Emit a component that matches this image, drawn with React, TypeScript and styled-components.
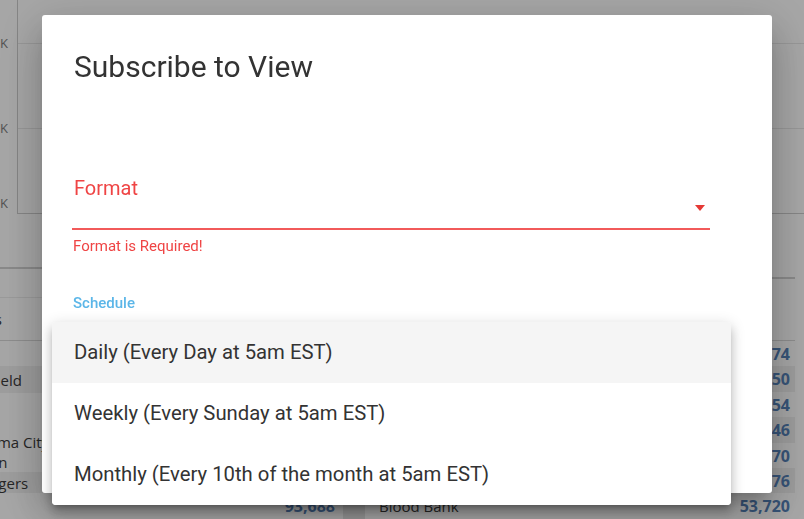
import React from 'react'
import styled, { createGlobalStyle } from 'styled-components'

const GlobalStyle = createGlobalStyle`
  html, body {
    margin: 0;
    padding: 0;
  }
  body {
    width: 804px;
    height: 519px;
    overflow: hidden;
    background: #fff;
    font-family: "Open Sans", "Liberation Sans", sans-serif;
  }
  * {
    box-sizing: border-box;
  }
`

type Row = { name: string, value: string, h: number, shaded?: boolean }

const leftRows: Row[] = [
    { name: 'Waco', value: '98,412', h: 25 },
    { name: 'Springfield', value: '97,350', h: 27, shaded: true },
    { name: 'Tyler', value: '96,204', h: 39 },
    { name: 'Oklahoma City', value: '95,870', h: 20 },
    { name: 'Brighton', value: '95,112', h: 20 },
    { name: 'East Rogers', value: '94,076', h: 21, shaded: true },
    { name: 'Plano', value: '93,688', h: 25 },
]

const rightRows: Row[] = [
    { name: 'Community Center', value: '61,974', h: 25 },
    { name: 'Public Library', value: '60,250', h: 26, shaded: true },
    { name: 'City Hall', value: '58,754', h: 25 },
    { name: 'Fire Station', value: '57,946', h: 26, shaded: true },
    { name: 'Food Pantry', value: '55,870', h: 25 },
    { name: 'Health Clinic', value: '54,976', h: 25, shaded: true },
    { name: 'Blood Bank', value: '53,720', h: 25 },
]

const menuItems = [
    'Daily (Every Day at 5am EST)',
    'Weekly (Every Sunday at 5am EST)',
    'Monthly (Every 10th of the month at 5am EST)',
]

export default function App() {
    return (
        <>
            <GlobalStyle />
            <Page>
                <ChartRow>
                    <AxisCol>
                        <AxisLabel $mt={35}>200K</AxisLabel>
                        <AxisLabel $mt={69}>100K</AxisLabel>
                        <AxisLabel $mt={59}>0K</AxisLabel>
                    </AxisCol>
                    <Plot>
                        <GridBand $h={43} />
                        <GridBand $h={85} $line />
                        <GridBand $h={85} $line />
                    </Plot>
                </ChartRow>

                <TablesRow>
                    <Panel $width={403} $top={53}>
                        <PanelTitle />
                        <HeaderRow $h={42} $padLeft={7}>
                            <HeaderText>Regions</HeaderText>
                        </HeaderRow>
                        {leftRows.map(r => (
                            <TableRow key={r.name} $h={r.h} $shaded={r.shaded} $padLeft={7} $padRight={8}>
                                <Name>{r.name}</Name>
                                <Value>{r.value}</Value>
                            </TableRow>
                        ))}
                    </Panel>
                    <Gap />
                    <Panel $width={430} $top={63}>
                        <HeaderRow $h={61} $padLeft={15}>
                            <HeaderText>Sites</HeaderText>
                        </HeaderRow>
                        {rightRows.map(r => (
                            <TableRow key={r.name} $h={r.h} $shaded={r.shaded} $padLeft={14} $padRight={5}>
                                <Name>{r.name}</Name>
                                <Value>{r.value}</Value>
                            </TableRow>
                        ))}
                    </Panel>
                </TablesRow>

                <Backdrop>
                    <Dialog>
                        <Title>Subscribe to View</Title>
                        <Field>
                            <FieldLabel>Format</FieldLabel>
                            <SelectRow>
                                <Arrow />
                            </SelectRow>
                            <HelperText>Format is Required!</HelperText>
                            <ShrunkLabel>Schedule</ShrunkLabel>
                        </Field>
                    </Dialog>
                </Backdrop>

                <Menu>
                    {menuItems.map((m, i) => (
                        <MenuItem key={m} $active={i === 0}>{m}</MenuItem>
                    ))}
                </Menu>
            </Page>
        </>
    )
}

const Page = styled('div')`
    position: relative;
    width: 804px;
    height: 519px;
    overflow: hidden;
    background: #fff;
`

const ChartRow = styled('div')`
    display: flex;
    height: 214px;
`

const AxisCol = styled('div')`
    width: 17px;
    flex-shrink: 0;
    display: flex;
    flex-direction: column;
    align-items: flex-end;
    padding-right: 9px;
`

const AxisLabel = styled('span')<{ $mt: number }>`
    margin-top: ${p => p.$mt}px;
    line-height: 16px;
    font-size: 13px;
    color: #7e7e7e;
    white-space: nowrap;
`

const Plot = styled('div')`
    flex: 1;
    display: flex;
    flex-direction: column;
    border-left: 1px solid #cdcdcd;
    border-bottom: 1px solid #cdcdcd;
`

const GridBand = styled('div')<{ $h: number, $line?: boolean }>`
    height: ${p => p.$h}px;
    border-top: ${p => (p.$line ? '1px solid #e8e8e8' : 'none')};
`

const TablesRow = styled('div')`
    display: flex;
    align-items: flex-start;
    margin-left: -60px;
    height: 305px;
`

const Panel = styled('div')<{ $width: number, $top: number }>`
    width: ${p => p.$width}px;
    flex-shrink: 0;
    margin-top: ${p => p.$top}px;
    border-top: 2px solid #d2d2d2;
`

const Gap = styled('div')`
    width: 22px;
    flex-shrink: 0;
    align-self: stretch;
    background: #e6e6e6;
`

const PanelTitle = styled('div')`
    height: 29px;
    border-bottom: 1px solid #ececec;
`

const HeaderRow = styled('div')<{ $h: number, $padLeft: number }>`
    height: ${p => p.$h + 1}px;
    display: flex;
    align-items: center;
    padding-left: ${p => p.$padLeft}px;
    border-bottom: 1px solid #d8d8d8;
`

const HeaderText = styled('span')`
    font-size: 15px;
    color: #333;
    white-space: nowrap;
`

const TableRow = styled('div')<{ $h: number, $shaded?: boolean, $padLeft: number, $padRight: number }>`
    height: ${p => p.$h}px;
    display: flex;
    align-items: center;
    justify-content: space-between;
    padding: 0 ${p => p.$padRight}px 0 ${p => p.$padLeft}px;
    background: ${p => (p.$shaded ? '#f1f1f1' : '#fff')};
`

const Name = styled('span')`
    font-size: 15px;
    color: #3a3a3a;
    white-space: nowrap;
`

const Value = styled('span')`
    font-size: 16px;
    font-weight: 700;
    color: #5581b8;
`

const Backdrop = styled('div')`
    position: fixed;
    inset: 0;
    background: rgba(0, 0, 0, 0.35);
    display: flex;
    align-items: flex-start;
    padding: 15px 0 0 42px;
`

const Dialog = styled('div')`
    width: 730px;
    height: 478px;
    background: #fff;
    border-radius: 3px;
    box-shadow: 0 11px 15px -7px rgba(0,0,0,0.2), 0 24px 38px 3px rgba(0,0,0,0.14), 0 9px 46px 8px rgba(0,0,0,0.12);
    padding: 0 0 0 32px;
    font-family: Roboto, "Liberation Sans", sans-serif;
`

const Title = styled('h2')`
    margin: 0;
    padding-top: 34px;
    font-size: 30px;
    line-height: 36px;
    font-weight: 400;
    color: #333;
`

const Field = styled('div')`
    width: 638px;
    margin: 92px 0 0 -2px;
    display: flex;
    flex-direction: column;
`

const FieldLabel = styled('label')`
    padding-left: 2px;
    font-size: 20px;
    line-height: 23px;
    color: #ef4444;
`

const SelectRow = styled('div')`
    height: 30px;
    display: flex;
    justify-content: flex-end;
    align-items: flex-start;
    border-bottom: 2px solid #f25a5a;
`

const Arrow = styled('span')`
    margin: 5px 5px 0 0;
    width: 0;
    height: 0;
    border-left: 5.5px solid transparent;
    border-right: 5.5px solid transparent;
    border-top: 6px solid #e53935;
`

const HelperText = styled('p')`
    margin: 7px 0 0;
    padding-left: 1px;
    font-size: 15px;
    line-height: 18px;
    color: #ef4444;
`

const ShrunkLabel = styled('label')`
    margin-top: 39px;
    padding-left: 1px;
    font-size: 15px;
    line-height: 18px;
    font-weight: 500;
    color: #5bb6e8;
`

const Menu = styled('ul')`
    position: fixed;
    top: 322px;
    left: 52px;
    width: 679px;
    margin: 0;
    padding: 0;
    list-style: none;
    background: #fff;
    border-radius: 4px;
    box-shadow: 0 5px 5px -3px rgba(0,0,0,0.2), 0 8px 10px 1px rgba(0,0,0,0.14), 0 3px 14px 2px rgba(0,0,0,0.12);
    overflow: hidden;
    font-family: Roboto, "Liberation Sans", sans-serif;
`

const MenuItem = styled('li')<{ $active?: boolean }>`
    height: 61px;
    line-height: 61px;
    padding-left: 22px;
    font-size: 20.3px;
    color: #333;
    background: ${p => (p.$active ? '#f5f5f5' : '#fff')};
`
